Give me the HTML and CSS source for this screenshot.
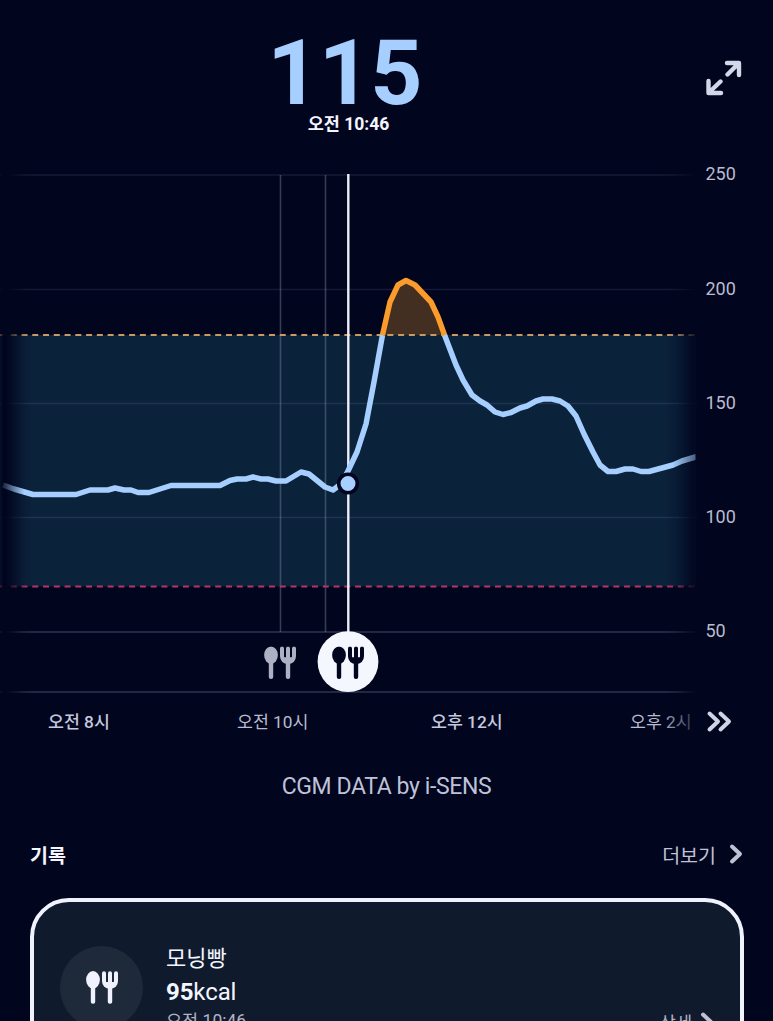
FILE: index.html
```html
<!DOCTYPE html>
<html lang="ko">
<head>
<meta charset="utf-8">
<title>CGM</title>
<link rel="stylesheet" href="styles.css">
</head>
<body>
<svg class="defs" width="0" height="0" aria-hidden="true">
  <symbol id="meal" viewBox="0 0 32 33">
    <ellipse cx="7" cy="8.8" rx="6.9" ry="8.7"/>
    <rect x="4.8" y="12" width="4.4" height="20.7" rx="2"/>
    <path d="M18 2.200v7.800c0 3.600 2.400 5.800 6 5.800s6-2.200 6-5.800V2.200M24 2.200V29" fill="none" stroke="currentColor" stroke-width="4" stroke-linecap="round"/>
    <path d="M18 11h12l-3 5.500h-6z"/>
    <rect x="21.800" y="14" width="4.400" height="18.700" rx="2"/>
  </symbol>
</svg>
<main class="screen">
  <header class="reading">
    <div class="reading-center">
      <div class="value">115</div>
      <div class="time">오전 10:46</div>
    </div>
    <svg class="expand" width="36" height="36" viewBox="0 0 36 36">
      <path d="M21 3h12v12M32.500 3.500 21.500 14.500M2.500 21v12H15M3 32.500 14.500 21.500"/>
    </svg>
  </header>

  <svg class="chart" width="773" height="595" viewBox="0 150 773 595">
    <defs>
      <linearGradient id="fade" gradientUnits="userSpaceOnUse" x1="0" y1="0" x2="700" y2="0">
        <stop offset="0" stop-color="#777"/>
        <stop offset=".003" stop-color="#222"/>
        <stop offset=".006" stop-color="#000"/>
        <stop offset=".012" stop-color="#222"/>
        <stop offset=".035" stop-color="#ddd"/>
        <stop offset=".046" stop-color="#fff"/>
        <stop offset=".950" stop-color="#fff"/>
        <stop offset=".966" stop-color="#ccc"/>
        <stop offset=".986" stop-color="#444"/>
        <stop offset="1" stop-color="#000"/>
      </linearGradient>
      <linearGradient id="line-fade" gradientUnits="userSpaceOnUse" x1="0" y1="0" x2="700" y2="0">
        <stop offset="0" stop-color="#000"/>
        <stop offset=".006" stop-color="#333"/>
        <stop offset=".035" stop-color="#fff"/>
        <stop offset=".960" stop-color="#fff"/>
        <stop offset="1" stop-color="#555"/>
      </linearGradient>
      <mask id="edges" maskUnits="userSpaceOnUse" x="0" y="150" width="773" height="595"><rect y="150" width="698" height="595" fill="url(#fade)"/></mask>
      <mask id="line-edges" maskUnits="userSpaceOnUse" x="0" y="150" width="773" height="595"><rect y="150" width="695.500" height="595" fill="url(#line-fade)"/></mask>
      <linearGradient id="label-fade" gradientUnits="userSpaceOnUse" x1="660" y1="0" x2="697" y2="0">
        <stop offset="0" stop-color="#b9bcd0"/>
        <stop offset="1" stop-color="#25283c"/>
      </linearGradient>
    </defs>
    <g mask="url(#edges)">
      <rect class="band" y="335" width="700" height="251.500"/>
      <path class="grid" d="M0 175H700M0 289.500H700M0 403.500H700M0 517.500H700"/>
      <path class="grid strong" d="M0 632H700M0 692H700"/>
    </g>
    <path class="event" d="M280.500 175V632M325.500 175V632"/>
    <path class="peak" d="M382 335L390 302 398 285 406 280.500 415 285 431 302 438 317 445 335Z"/>
    <g mask="url(#edges)">
      <path class="limit high" d="M0 335H695"/>
      <path class="limit low" d="M0 586.500H695"/>
    </g>
    <path class="cursor" d="M348.300 174V640"/>
    <g mask="url(#line-edges)">
      <path class="trace" d="M3 485L14 489 33 494.500H76L90 490H108L115 488 124 490H131L138 492.500H149L171 485.500H220L230 480.500 237 479H246L253 477 261 479H268L276 481H286L301 472 309 474 325 487 333 490 341 484 348 471 357 452 366 424 374 382 382.500 335"/>
      <path class="trace" d="M444.500 335L456 365 463 380 472 395 480 401 487 405 495 412 503 414.500 511 412.500 520 408 527 406 536 401 543 399H552L560 401 568 406 576 416 584 434 593 452 600 465 608 471.500H616L625 469H633L641 471.500H649L673 465 682 461 697 456.500"/>
    </g>
    <path class="trace over" d="M382.500 335L390 302 398 285 406 280.500 415 285 431 302 438 317 444.500 335"/>
    <circle class="point" cx="348" cy="483.500" r="9.300"/>
    <use class="meal-muted" href="#meal" x="264" y="646.300" width="32" height="33"/>
    <circle class="meal-disc" cx="348" cy="661.700" r="30.400"/>
    <use class="meal-dark" href="#meal" x="332" y="646.300" width="32" height="33"/>
    <g class="axis">
      <text x="705.500" y="180">250</text>
      <text x="705.500" y="294.500">200</text>
      <text x="705.500" y="408.500">150</text>
      <text x="705.500" y="522.500">100</text>
      <text x="705.500" y="637">50</text>
    </g>
    <g class="axis hours">
      <text class="bold" x="48" y="728">오전 8시</text>
      <text x="237" y="728">오전 10시</text>
      <text class="bold" x="431" y="728">오후 12시</text>
      <text x="630" y="728" fill="url(#label-fade)">오후 2시</text>
    </g>
    <path class="next" d="M709.500 713.500 718 721.500 709.500 729.500M720.500 713.500 729 721.500 720.500 729.500"/>
  </svg>

  <p class="source">CGM DATA by i-SENS</p>

  <section class="records">
    <div class="records-head">
      <h2>기록</h2>
      <a class="more">더보기 <svg width="14" height="22" viewBox="0 0 14 22"><path d="M3 3.500 11 11 3 18.500"/></svg></a>
    </div>
    <article class="card">
      <div class="meal-icon"><svg width="32" height="33"><use href="#meal"/></svg></div>
      <div class="meal-info">
        <div class="name">모닝빵</div>
        <div class="kcal"><b>95</b>kcal</div>
        <div class="when">오전 10:46</div>
      </div>
      <a class="detail">상세 <svg width="14" height="22" viewBox="0 0 14 22"><path d="M3 3.500 11 11 3 18.500"/></svg></a>
    </article>
  </section>
</main>
</body>
</html>
```
FILE: styles.css
```css
* { box-sizing: border-box; }
body { margin: 0; background: #01051d; color: #f3f5ff; font-family: Roboto, "Noto Sans CJK KR", sans-serif; }
.screen { width: 773px; height: 1021px; overflow: hidden; display: flex; flex-direction: column; }
.defs { display: block; height: 0; }
.reading { height: 150px; display: grid; grid-template-columns: 80px 1fr 80px; flex: none; }
.reading-center { grid-column: 2; width: 534px; text-align: center; padding-top: 34px; }
.value { font-size: 91px; line-height: 78px; font-weight: 700; color: #a6cfff; letter-spacing: -.7px; padding-right: 5px; }
.time { font-size: 17.5px; line-height: 24px; font-weight: 700; padding-left: 3px; }
.expand { margin: 60px 0 0 13px; fill: none; stroke: #d3d7ea; stroke-width: 4.400; stroke-linecap: round; stroke-linejoin: round; }
.chart { display: block; flex: none; }
.band { fill: #0b223b; }
.grid { stroke: #a9b4d8; stroke-opacity: .13; stroke-width: 1.500; }
.grid.strong { stroke-opacity: .2; stroke-width: 2; }
.limit { stroke-width: 2; stroke-dasharray: 6 4.760; }
.high { stroke: #c99a64; }
.low { stroke: #b83566; }
.event { stroke: #8490ac; stroke-opacity: .4; stroke-width: 1.600; }
.cursor { stroke: #eceffa; stroke-width: 2.400; }
.peak { fill: #432f22; }
.trace { fill: none; stroke: #a6cfff; stroke-width: 5.500; stroke-linejoin: round; }
.trace.over { stroke: #fb9b2c; }
.point { fill: #a6cfff; stroke: #01051d; stroke-width: 3.600; }
.meal-muted { fill: #aeb0c4; color: #aeb0c4; }
.meal-disc { fill: #f5f7ff; }
.meal-dark { fill: #01051d; color: #01051d; }
.axis { fill: #b9bcd0; font-size: 18px; }
.hours { font-size: 17.300px; }
.bold { font-weight: 500; fill: #c5c9dd; }
.next { fill: none; stroke: #d0d4e7; stroke-width: 4; stroke-linecap: round; stroke-linejoin: round; }
.source { margin: 28px 0 0; height: 28px; line-height: 28px; font-size: 23px; letter-spacing: -.380px; text-align: center; color: #bfc2d8; }
.records { padding: 36px 30px 0 30px; }
.records-head { height: 34px; display: flex; align-items: center; justify-content: space-between; }
h2 { margin: 0; font-size: 19.500px; font-weight: 700; }
.more, .detail { display: flex; align-items: center; gap: 13px; font-size: 19.500px; color: #bfc2d8; }
.more svg, .detail svg { fill: none; stroke: #bfc2d3; stroke-width: 4; stroke-linecap: round; stroke-linejoin: round; }
.card { margin: 27px -1px 0 0; height: 190px; border: 4px solid #f0f3ff; border-radius: 39px; background: #101a2d; display: flex; padding: 44px 26px 0; }
.meal-icon { width: 83px; height: 83px; border-radius: 50%; background: #1e2a3a; display: grid; place-items: center; fill: #f0f3ff; color: #f0f3ff; }
.meal-icon svg { display: block; }
.meal-info { margin-left: 23px; }
.name { font-size: 22px; line-height: 30px; margin-top: -2px; }
.kcal { font-size: 24px; line-height: 32px; margin-top: 2px; letter-spacing: -.100px; }
.when { font-size: 17.500px; line-height: 26px; color: #aeb3c6; }
.detail { align-self: flex-start; margin: 63px 0 0 auto; font-size: 17.500px; gap: 8px; color: #aeb3c6; }
```
